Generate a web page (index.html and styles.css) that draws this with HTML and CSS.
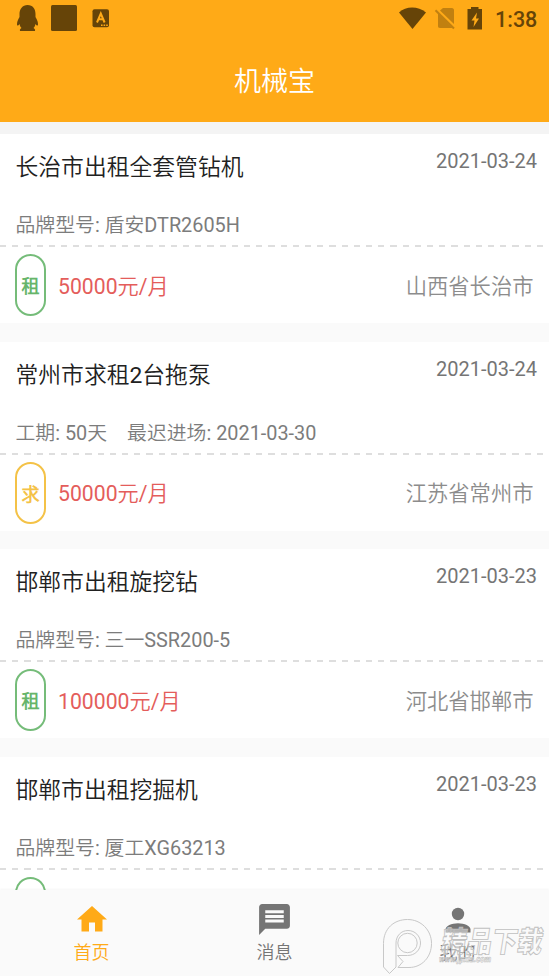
FILE: index.html
```html
<!DOCTYPE html>
<html lang="zh-CN">
<head>
<meta charset="utf-8">
<title>机械宝</title>
<link rel="stylesheet" href="styles.css">
</head>
<body>
<div class="app">
  <header class="header">
    <div class="status">
      <svg class="status-left" width="112" height="36" viewBox="0 0 112 36">
        <path d="M27.500 5c5.500 0 8 4 8 9v3c1 2 2.500 4 2.500 7 0 2-1 2-2.500 0-.5 2-1 3-2 4 1 1 2 1 1.500 3H20c-.5-2 .5-2 1.500-3-1-1-1.500-2-2-4-1.500 2-2.500 2-2.500 0 0-3 1.500-5 2.500-7v-3c0-5 3-9 8-9z"/>
        <rect x="51" y="5" width="26" height="26" rx="1.500"/>
        <rect x="92.500" y="9.300" width="16.500" height="18" rx="2"/>
        <path class="cut" d="M97 22.500l3.800-9 3.800 9M98.500 19.300h4.600"/>
        <path class="dots" d="M101 25.300h7"/>
      </svg>
      <svg class="status-right" width="90" height="36" viewBox="0 0 90 36">
        <path d="M1 12.500C8 5.800 20 5.800 28 12.500L14.500 29z"/>
        <g class="dim"><path d="M45 8h9c1 0 2 1 2 2v14L42 10.500zM40 13L54.500 28H42c-1.500 0-2-.7-2-2z"/><path class="slash" d="M37.500 10.200l18.500 18.300"/></g>
        <path d="M73 7h7.500v2H84v20.500H69.500V9H73z"/>
        <path class="bolt" d="M79 12.500l-5.500 8h3l-1 6.500 5.500-8.500h-3z"/>
      </svg>
      <span class="clock">1:38</span>
    </div>
    <h1 class="app-title">机械宝</h1>
  </header>
  <main class="list">
    <article class="card">
      <div class="head"><h2>长治市出租全套管钻机</h2><time>2021-03-24</time></div>
      <div class="info"><span>品牌型号: 盾安DTR2605H</span></div>
      <div class="dash"></div>
      <div class="foot"><span class="tag">租</span><span class="price">50000元/月</span><span class="place">山西省长治市</span></div>
    </article>
    <article class="card">
      <div class="head"><h2>常州市求租2台拖泵</h2><time>2021-03-24</time></div>
      <div class="info"><span>工期: 50天</span><span>最迟进场: 2021-03-30</span></div>
      <div class="dash"></div>
      <div class="foot"><span class="tag want">求</span><span class="price">50000元/月</span><span class="place">江苏省常州市</span></div>
    </article>
    <article class="card">
      <div class="head"><h2>邯郸市出租旋挖钻</h2><time>2021-03-23</time></div>
      <div class="info"><span>品牌型号: 三一SSR200-5</span></div>
      <div class="dash"></div>
      <div class="foot"><span class="tag">租</span><span class="price">100000元/月</span><span class="place">河北省邯郸市</span></div>
    </article>
    <article class="card">
      <div class="head"><h2>邯郸市出租挖掘机</h2><time>2021-03-23</time></div>
      <div class="info"><span>品牌型号: 厦工XG63213</span></div>
      <div class="dash"></div>
      <div class="foot"><span class="tag"></span></div>
    </article>
  </main>
  <nav class="nav">
    <a class="item active">
      <svg width="36" height="36" viewBox="0 0 24 24"><path d="M10 20v-6h4v6h5v-8h3L12 3 2 12h3v8z"/></svg>
      <span>首页</span>
    </a>
    <a class="item">
      <svg width="37" height="37" viewBox="0 0 24 24"><path d="M20 2H4c-1.100 0-1.990.9-1.990 2L2 22l4-4h14c1.100 0 2-.9 2-2V4c0-1.100-.9-2-2-2zm-2 12H6v-2h12v2zm0-3H6V9h12v2zm0-3H6V6h12v2z"/></svg>
      <span>消息</span>
    </a>
    <a class="item">
      <svg width="36" height="36" viewBox="0 0 36 36"><circle cx="18" cy="12.500" r="6.200"/><path d="M5.500 31v-3c0-3.500 6-6.300 12.500-6.300S30.500 24.500 30.500 28v3z"/></svg>
      <span>我的</span>
    </a>
  </nav>
  <svg class="watermark" width="170" height="60" viewBox="0 0 170 60">
    <path class="logo" d="M4.500 51V27.500C4.500 12.500 15 3.500 28.500 3.500S52.500 14 52.500 27.500 43 51.500 30 51.500H19L24 45.500 18.500 39.500H28.500C36 39.500 41.500 34 41.500 27S36 14.500 29 14.500 17 20 17 27V51L10.500 57.500z"/>
    <circle class="logo" cx="28.500" cy="27" r="9.700"/>
    <g transform="skewX(-9)">
      <text class="brand" x="67" y="36" textLength="101" lengthAdjust="spacingAndGlyphs">精品下载</text>
      <text class="site" x="67" y="46" textLength="52" lengthAdjust="spacingAndGlyphs">www.jpxia.com</text>
    </g>
  </svg>
</div>
</body>
</html>
```
FILE: styles.css
```css
* { box-sizing: border-box; }
body {
  margin: 0;
  background: #fafafa;
  font-family: Roboto, "Noto Sans CJK SC DemiLight", "Noto Sans CJK SC", sans-serif;
  font-weight: 400;
}
.app {
  position: relative;
  display: flex;
  flex-direction: column;
  width: 549px;
  height: 976px;
  overflow: hidden;
}
.header {
  flex: none;
  height: 122px;
  background: #ffaa17;
  color: #fff;
}
.status {
  display: flex;
  align-items: center;
  height: 38px;
  color: #664408;
  fill: #664408;
}
.status svg { flex: none; align-self: flex-start; }
.status-right { margin-left: 286px; }
.clock {
  margin-left: 7px;
  font-size: 21.5px;
  font-weight: 500;
  line-height: 39px;
}
.cut { fill: none; stroke: #ffaa17; stroke-width: 2; }
.dots { stroke: #ffaa17; stroke-width: 1.5; stroke-dasharray: 1.6 1; }
.bolt { fill: #ffaa17; }
.dim { opacity: .4; }
.slash { fill: none; stroke: #664408; stroke-width: 2; }
.app-title {
  margin: 0;
  font-size: 27px;
  font-weight: 400;
  line-height: 89px;
  text-align: center;
}
.list {
  flex: 1;
  min-height: 0;
  overflow: hidden;
  border-top: 12px solid #f4f4f4;
}
.card {
  height: 189px;
  margin-bottom: 18.5px;
  background: #fff;
}
.head {
  display: flex;
  justify-content: space-between;
  height: 66px;
  padding: 0 12px 0 15.5px;
  white-space: nowrap;
}
h2 {
  margin: 0;
  color: #212121;
  font-size: 22.8px;
  font-weight: 400;
  line-height: 68px;
}
time {
  color: #757575;
  font-size: 20px;
  line-height: 54px;
}
.info {
  display: flex;
  gap: 20px;
  height: 45px;
  padding-left: 15.5px;
  color: #7c7c7c;
  font-size: 19.85px;
  line-height: 51px;
  white-space: nowrap;
}
.dash {
  height: 2px;
  background: repeating-linear-gradient(90deg, #dedede 0 6.1px, transparent 6.1px 12.2px);
}
.foot {
  display: flex;
  align-items: center;
  height: 76px;
  padding: 0 15.5px 0 15px;
}
.tag {
  display: flex;
  align-items: center;
  justify-content: center;
  width: 31px;
  height: 62px;
  margin-right: 12px;
  border: 2px solid #66b56ae6;
  border-radius: 15.5px;
  color: #66b56a;
  font-size: 18px;
  font-weight: 700;
}
.want { border-color: #f4c247; color: #f4c247; }
.price, .place { padding-bottom: 2px; }
.price { color: #e45d5b; font-size: 21.2px; }
.place { margin-left: auto; color: #8c8c8c; font-size: 21.3px; }
.nav {
  display: flex;
  flex: none;
  height: 86px;
  background: #fafafa;
  box-shadow: 0 -1px 2px #0000000a;
  z-index: 1;
}
.item {
  display: flex;
  flex: 1;
  flex-direction: column;
  align-items: center;
  height: 86px;
  padding-top: 11px;
  color: #757575;
  fill: currentColor;
  font-size: 18px;
}
.item svg { height: 37px; }
.item span { line-height: 29px; }
.active { color: #ffaa17; }
.watermark {
  position: absolute;
  left: 379px;
  top: 916px;
  z-index: 2;
}
.logo { fill: #fafafa99; stroke: #c8c8c8; stroke-width: 1; }
.brand, .site {
  fill: #fafafa77;
  stroke: #c0c0c0;
  stroke-width: .9;
  font-family: "Noto Sans CJK SC", sans-serif;
  font-size: 29px;
  font-weight: 900;
}
.site { font-family: Roboto, sans-serif; font-size: 9px; stroke-width: .6; }
```
